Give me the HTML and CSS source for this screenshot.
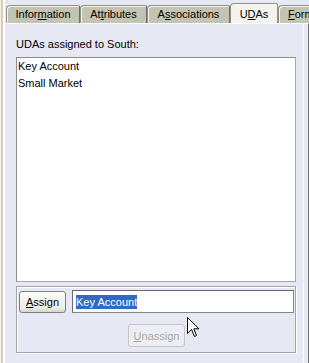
FILE: index.html
```html
<!DOCTYPE html>
<html lang="en">
<head>
    <meta charset="UTF-8">
    <title>UDAs</title>
    <link rel="stylesheet" href="styles.css">
</head>
<body>
    <div class="edge"></div>
    <div class="main">
        <div class="tabs">
            <div class="tab tab-info">Infor<u>m</u>ation</div>
            <div class="tab tab-attr">At<u>t</u>ributes</div>
            <div class="tab tab-assoc">A<u>s</u>sociations</div>
            <div class="tab tab-udas active">U<u>D</u>As</div>
            <div class="tab tab-form"><u>F</u>orm</div>
        </div>
        <div class="panel">
            <div class="panel-body">
                <p class="label">UDAs assigned to South:</p>
                <ul class="listbox">
                    <li>Key Account</li>
                    <li>Small Market</li>
                </ul>
                <div class="group">
                    <div class="assign-row">
                        <button type="button" class="btn"><u>A</u>ssign</button>
                        <div class="field"><span class="selected">Key Account</span></div>
                    </div>
                    <div class="unassign-row">
                        <button type="button" class="btn" disabled><u>U</u>nassign</button>
                    </div>
                </div>
            </div>
        </div>
    </div>

    <svg class="cursor" width="13" height="21" viewBox="0 0 13 21">
        <path d="M0.5 0.5 L0.5 16.5 L4.5 12.5 L7.5 19.5 L9.5 18.5 L6.8 11.8 L12 11.8 Z" fill="#fff" stroke="#000" stroke-width="1"/>
    </svg>
</body>
</html>
```

FILE: styles.css
```css
body {
    margin: 0;
    width: 309px;
    height: 363px;
    overflow: hidden;
    display: flex;
    background-color: #e6e8f4;
    font-family: "Liberation Sans", Arial, sans-serif;
    font-size: 11px;
    color: #000;
    position: relative;
}

.edge {
    width: 5px;
    flex-shrink: 0;
    background: linear-gradient(to right, #f2efe6 0 1px, #d6cebb 1px 3px, #fff 3px 5px);
}

.main {
    flex: 1;
    display: flex;
    flex-direction: column;
    min-width: 0;
}

.tabs {
    height: 23px;
    display: flex;
    align-items: flex-end;
    padding-left: 1px;
    overflow: hidden;
    position: relative;
    z-index: 1;
}

.tab {
    flex-shrink: 0;
    box-sizing: border-box;
    height: 18px;
    line-height: 13px;
    padding: 2px 0 2px;
    text-align: center;
    background-color: #c4c4b2;
    border: 1px solid #919189;
    border-bottom: none;
    border-right-color: #6e6e68;
    border-radius: 4px 2px 0 0;
    box-shadow: inset 1px 1px 0 #f4f3ec;
}

.tab-info { width: 74px; }
.tab-attr { width: 67px; }
.tab-assoc { width: 83px; }
.tab-udas { width: 48px; }
.tab-form { width: 60px; text-align: left; padding-left: 9px; }

.tab.active {
    height: 21px;
    padding-top: 4px;
    margin-bottom: -1px;
    background-color: #f4f3ec;
    border-color: #919189;
    box-shadow: none;
}

.panel {
    flex: 1;
    display: flex;
    border-top: 1px solid #fff;
    border-right: 1px solid #77777a;
}

.panel-body {
    flex: 1;
    margin-right: 4px;
    border-right: 1px solid #fff;
    padding: 14px 7px 0 11px;
}

.label {
    margin: 0 0 6px;
    line-height: 13px;
}

.listbox {
    list-style: none;
    margin: 0;
    padding: 0 0 0 1px;
    height: 223px;
    background-color: #fff;
    border: 1px solid #8c8c8c;
    border-right-color: #a8a8a8;
    border-bottom-color: #a8a8a8;
}

.listbox li {
    line-height: 17px;
}

.group {
    box-sizing: border-box;
    margin-top: 4px;
    height: 67px;
    border: 1px solid #a3a3a8;
    box-shadow: 1px 1px 0 #fff, inset 1px 1px 0 #fff;
    padding: 3px 1px 0 2px;
}

.assign-row {
    display: flex;
    align-items: center;
    gap: 6px;
}

.btn {
    font-family: inherit;
    font-size: 11px;
    color: #000;
    height: 22px;
    padding: 0 6px;
    border: 1px solid #7f7f7f;
    border-radius: 3px;
    background: linear-gradient(to bottom, #fdfdfb, #ecebe5 80%, #d6d4cb);
}

.btn:disabled {
    color: #aca899;
    border-color: #c9c7ba;
    background: #eceef6;
}

.field {
    flex: 1;
    box-sizing: border-box;
    height: 23px;
    display: flex;
    align-items: center;
    padding-left: 3px;
    background-color: #fff;
    border: 1px solid #868686;
    border-top-color: #6a6a6a;
    border-left-color: #6a6a6a;
}

.selected {
    background-color: #316ac5;
    color: #fff;
    line-height: 14px;
}

.unassign-row {
    display: flex;
    justify-content: center;
    margin-top: 11px;
}

.unassign-row .btn {
    height: 23px;
    padding: 0 5px;
}

.cursor {
    position: absolute;
    left: 187px;
    top: 317px;
}
```
